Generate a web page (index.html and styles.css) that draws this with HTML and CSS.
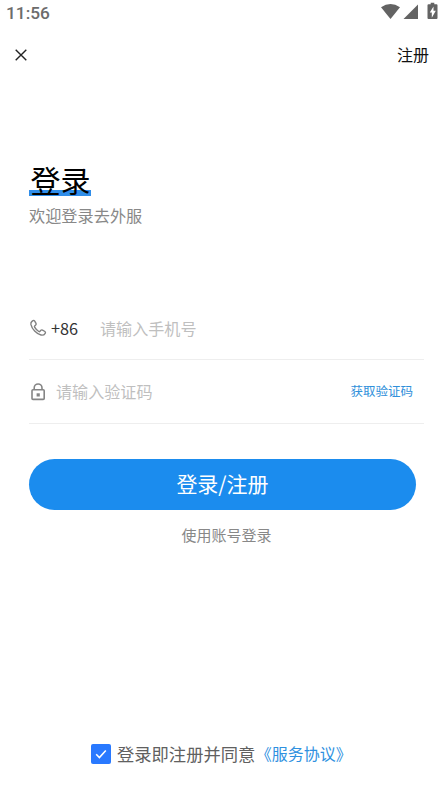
FILE: index.html
```html
<!DOCTYPE html>
<html lang="zh-CN">
<head>
<meta charset="utf-8">
<title>登录</title>
<link rel="stylesheet" href="styles.css">
</head>
<body>
<div class="screen">
  <div class="status">
    <span class="clock">11:56</span>
    <svg class="indicators" width="57" height="18" viewBox="0 0 57 18">
      <path d="M0 5.200Q9.500-1.200 19 5.200L9.500 17Z"/>
      <path d="M37 2.500V17H22.500Z"/>
      <path fill-rule="evenodd" d="M47.500 2.200h2.200V.7h3.600v1.500h2.200q1 0 1 1V16q0 1-1 1h-8q-1 0-1-1V3.200q0-1 1-1ZM52.500 4.500l-3.700 6h2v5.200l4-6.900h-2.300Z"/>
    </svg>
  </div>
  <header class="nav">
    <svg class="close" width="12" height="12" viewBox="0 0 12 12"><path d="M.7.700 11.300 11.300M11.300.700.7 11.300"/></svg>
    <span class="register">注册</span>
  </header>
  <section class="intro">
    <h1 class="title">登录</h1>
    <p class="subtitle">欢迎登录去外服</p>
  </section>
  <form class="form">
    <div class="field">
      <svg class="phone" width="18" height="18" viewBox="0 0 18 18"><path d="M3 2.400 4 1.600Q5 1 5.700 2.100L7 4.400Q7.500 5.300 6.700 6L5.700 6.900Q5.200 7.500 5.600 8.200 7.200 11 9.800 12.500 10.500 12.900 11 12.300L11.900 11.300Q12.600 10.600 13.500 11.100L15.900 12.500Q16.900 13.200 16.200 14.300 14.700 16.700 12 16C7.500 15 2.900 10.100 1.900 5.400Q1.600 3.500 3 2.400Z"/></svg>
      <span class="code">+86</span>
      <span class="placeholder">请输入手机号</span>
    </div>
    <div class="field field-verify">
      <svg class="lock" width="16" height="18" viewBox="0 0 16 18"><rect x="2" y="6.800" width="12.200" height="9.600" rx="1"/><path d="M4.200 6.800V4.900a3.900 3.900 0 0 1 7.800 0v1.900"/><path class="keyhole" d="M6.600 10.300h3.200v3.200h-3.200z"/></svg>
      <span class="placeholder">请输入验证码</span>
      <span class="get-code">获取验证码</span>
    </div>
  </form>
  <div class="submit">登录/注册</div>
  <div class="account">使用账号登录</div>
  <footer class="agreement">
    <span class="checkbox"><svg width="20" height="20" viewBox="0 0 20 20"><path d="m5.200 10.300 3.200 3.200 6.400-7"/></svg></span>
    <span class="agree-text">登录即注册并同意</span>
    <span class="terms">《服务协议》</span>
  </footer>
</div>
</body>
</html>
```

FILE: styles.css
```css
* { box-sizing: border-box; }
body {
  margin: 0;
  background: #fff;
  font-family: "Noto Sans CJK SC", sans-serif;
  font-weight: 400;
}
.screen {
  height: 791px;
  display: flex;
  flex-direction: column;
  overflow: hidden;
  white-space: nowrap;
}
.status {
  height: 26px;
  padding: 2px 7px 0 6px;
  display: flex;
  justify-content: space-between;
  align-items: flex-start;
}
.clock {
  font: 500 17.3px/22px Roboto, sans-serif;
  color: #6c6c6c;
}
.indicators { fill: #636363; }
.nav {
  height: 56px;
  padding: 0 16px 0 15px;
  display: flex;
  justify-content: space-between;
  align-items: center;
}
.close { margin-top: 1px; fill: none; stroke: #222; stroke-width: 1.4; }
.register { font-size: 16px; line-height: 24px; color: #111; }
.intro { padding: 78px 29px 0; }
.title {
  width: 62px;
  height: 36px;
  margin: 0;
  font-size: 30px;
  font-weight: 400;
  line-height: 38px;
  text-align: center;
  text-indent: 1px;
  color: #000;
  background: linear-gradient(#2f8de9, #2f8de9) bottom / 100% 6px no-repeat;
}
.subtitle {
  margin: 7px 0 0;
  font-size: 16.2px;
  line-height: 24px;
  color: #888;
}
.form { margin: 69px 21px 0 29px; }
.field {
  height: 64px;
  display: flex;
  align-items: center;
  border-bottom: 1px solid #eee;
}
.phone { fill: none; stroke: #808080; stroke-width: 1.4; }
.code {
  width: 49px;
  margin-left: 4px;
  font-size: 16.3px;
  color: #333;
}
.placeholder { font-size: 16.1px; color: #bfbfbf; }
.field-verify .placeholder,
.field-verify .get-code { padding-bottom: 2px; }
.lock {
  margin: 0 10px 0 1px;
  fill: none;
  stroke: #858585;
  stroke-width: 1.6;
}
.lock .keyhole { fill: #858585; stroke: none; }
.get-code {
  margin-left: auto;
  margin-right: 11px;
  font-size: 12.5px;
  color: #3090da;
}
.submit {
  height: 51px;
  margin: 34.500px 29px 0;
  border-radius: 26px;
  background: #1b8cee;
  color: #fff;
  font-size: 21px;
  line-height: 48px;
  text-align: center;
}
.account {
  margin-top: 13px;
  padding-left: 8px;
  font-size: 15px;
  line-height: 24px;
  text-align: center;
  color: #888;
}
.agreement {
  margin: auto 0 25px 91px;
  height: 24px;
  display: flex;
  align-items: center;
  line-height: 24px;
}
.checkbox {
  width: 20px;
  height: 20px;
  border-radius: 2px;
  background: #2979ff;
}
.checkbox svg { display: block; fill: none; stroke: #fff; stroke-width: 1.6; }
.agree-text { margin-left: 6px; font-size: 17.3px; color: #606060; }
.terms { margin-left: .5px; padding-bottom: 2px; font-size: 16px; color: #2f91df; }
```
